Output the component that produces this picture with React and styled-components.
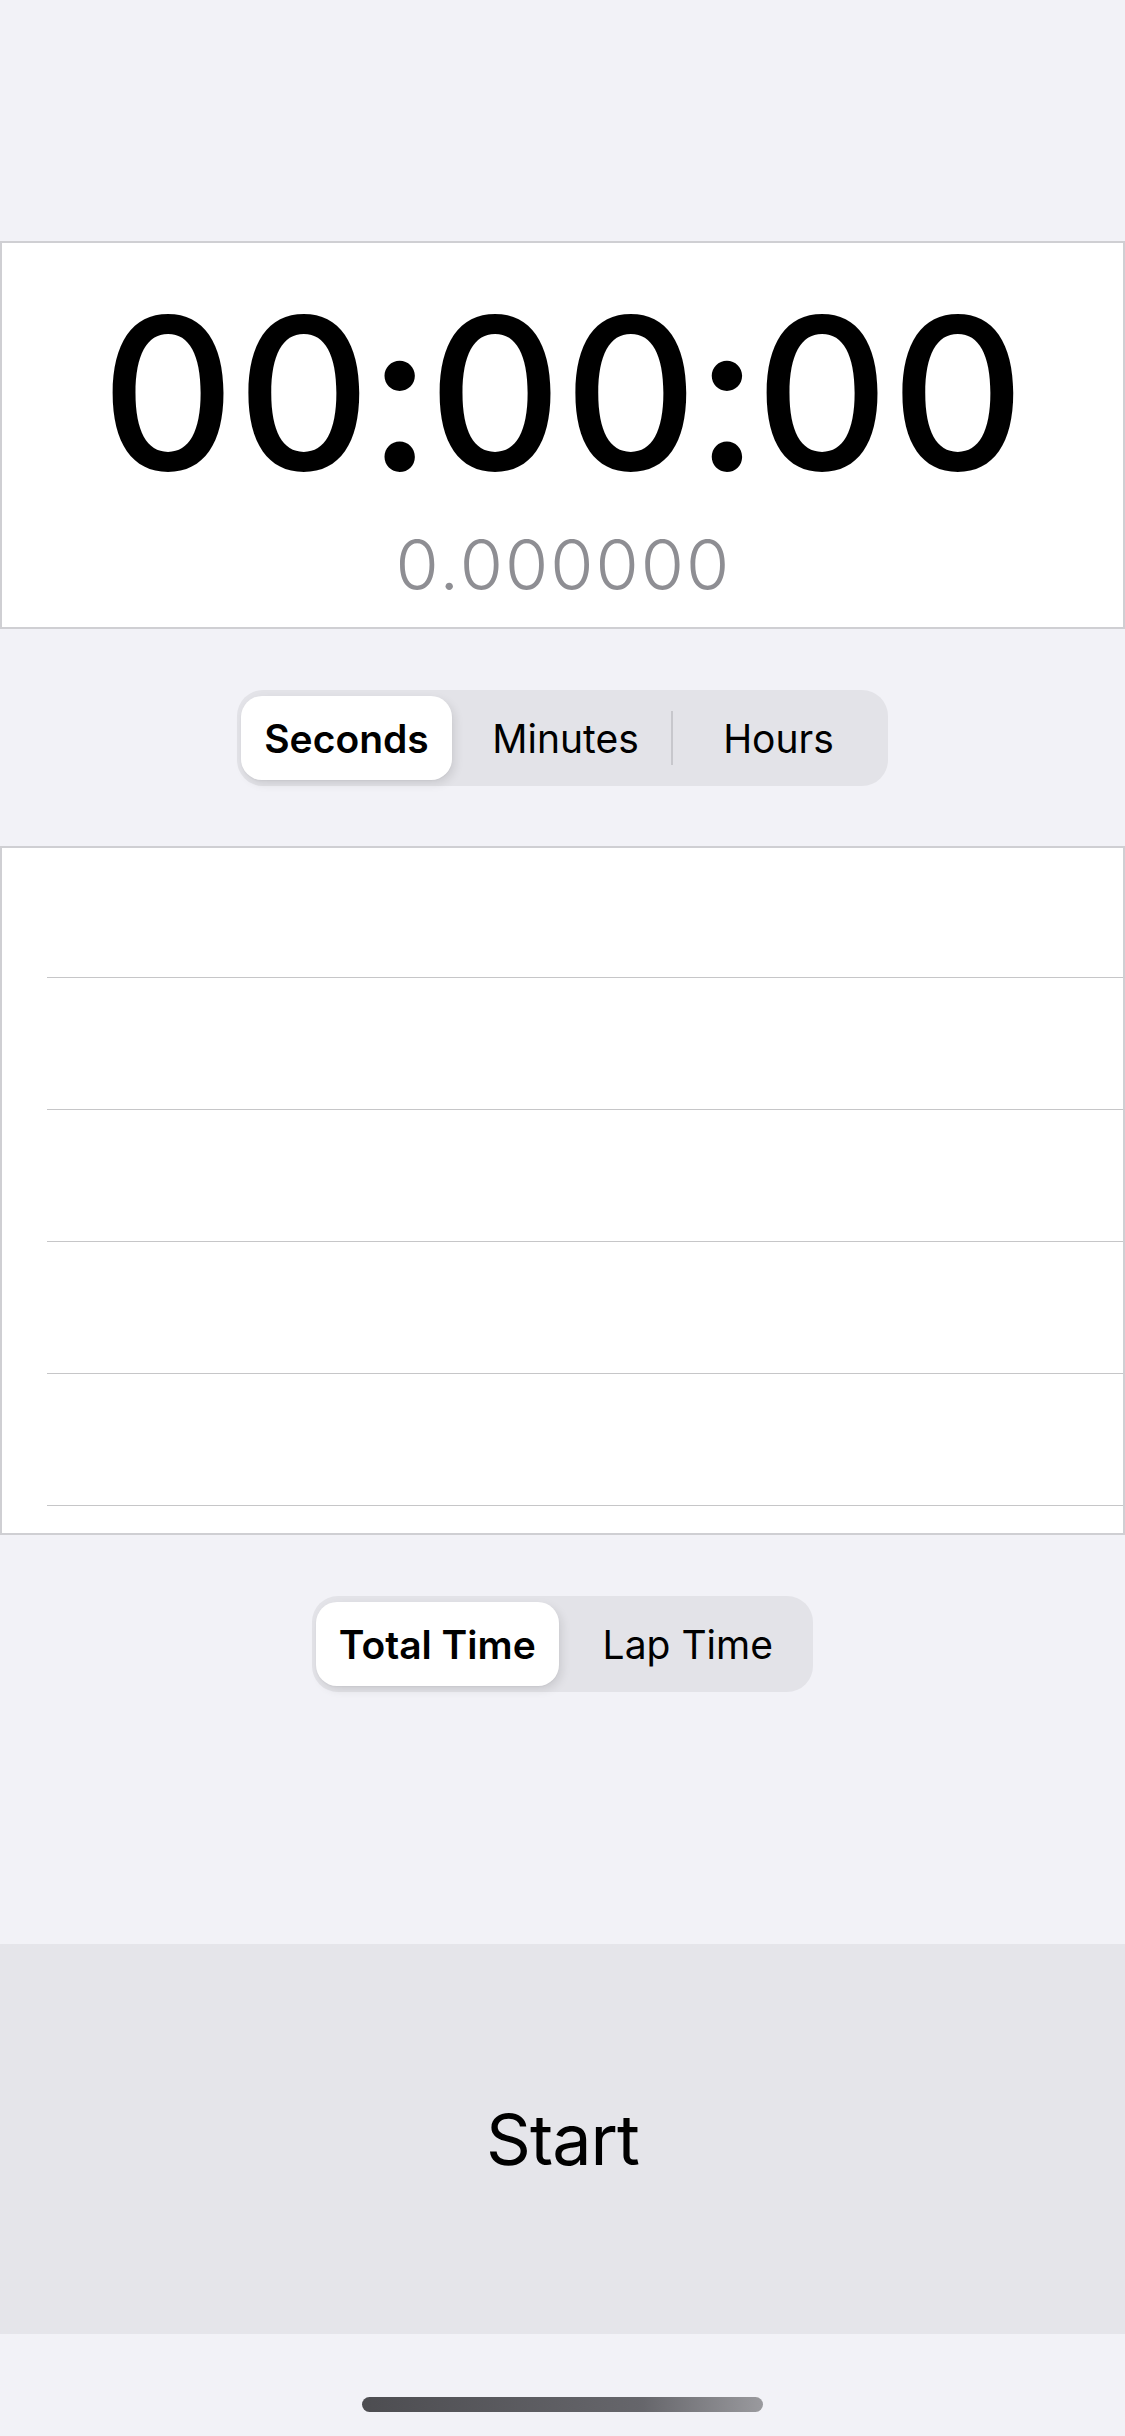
import { Fragment } from "react";
import styled, { createGlobalStyle } from "styled-components";

const GlobalStyle = createGlobalStyle`
    html, body {
        margin: 0;
        padding: 0;
        background: #f2f2f7;
    }
    body {
        font-family: Inter, "Noto Sans", "Liberation Sans", sans-serif;
        color: #000;
    }
`

const units = ["Seconds", "Minutes", "Hours"]
const modes = ["Total Time", "Lap Time"]
const laps = [0, 1, 2, 3, 4]

const Segmented = ({ items, active, width }) => {
    return <Segments width={width}>
        {
            items.map((label, index) => {
                // divider only between two segments that are not selected
                const showDivider = index > 0 && index !== active && index - 1 !== active
                return <Fragment key={label}>
                    {index > 0 && <Divider visible={showDivider} />}
                    <Segment active={index === active}>{label}</Segment>
                </Fragment>
            })
        }
    </Segments>
}

const App = () => {
    return <Page>
        <GlobalStyle />
        <TimerCard>
            <BigTime>00:00:00</BigTime>
            <SubTime>0.000000</SubTime>
        </TimerCard>
        <Segmented items={units} active={0} width={651} />
        <LapCard>
            {
                laps.map((x) => <LapRow key={x} />)
            }
        </LapCard>
        <Segmented items={modes} active={0} width={501} />
        <StartBar>
            <StartLabel>Start</StartLabel>
        </StartBar>
        <Footer>
            <HomeIndicator />
        </Footer>
    </Page>
}

const Page = styled.div`
    min-height: 2436px;
    display: flex;
    flex-direction: column;
    align-items: center;
    background: #f2f2f7;
    padding-top: 241px;
    box-sizing: border-box;
`
const TimerCard = styled.div`
    width: 100%;
    box-sizing: border-box;
    height: 388px;
    background: #fff;
    border: 2px solid #cfcfd3;
    padding: 42px 0 27px;
    display: flex;
    flex-direction: column;
    align-items: center;
`
const BigTime = styled.div`
    font-size: 211px;
    line-height: 217px;
    font-weight: 500;
    letter-spacing: -1px;
    font-variant-numeric: tabular-nums;
`
const SubTime = styled.div`
    margin-top: 27px;
    font-size: 70px;
    line-height: 72px;
    font-weight: 300;
    color: #8e8e93;
    font-variant-numeric: tabular-nums;
`
const Segments = styled.div`
    margin-top: 61px;
    width: ${p => p.width}px;
    height: 96px;
    box-sizing: border-box;
    padding: 6px 4px;
    border-radius: 26px;
    background: #e3e3e8;
    display: flex;
    align-items: center;
`
const Segment = styled.div`
    flex: 1;
    height: 84px;
    display: flex;
    align-items: center;
    justify-content: center;
    border-radius: 21px;
    font-size: 39px;
    font-weight: ${p => p.active ? 590 : 400};
    background: ${p => p.active ? "#fff" : "transparent"};
    margin-right: ${p => p.active ? "6px" : "0"};
    box-shadow: ${p => p.active ? "3px 4px 10px rgba(0,0,0,0.10), 0 1px 2px rgba(0,0,0,0.04)" : "none"};
`
const Divider = styled.div`
    width: 2px;
    height: 54px;
    background: ${p => p.visible ? "#c7c7cc" : "transparent"};
`
const LapCard = styled.div`
    margin-top: 60px;
    width: 100%;
    box-sizing: border-box;
    background: #fff;
    border: 2px solid #cfcfd3;
    padding-bottom: 27px;
`
const LapRow = styled.div`
    height: 131px;
    margin-left: 45px;
    border-bottom: 1px solid #c6c6c8;
    &:first-child{
        height: 129px;
    }
`
const StartBar = styled.div`
    margin-top: auto;
    width: 100%;
    height: 390px;
    background: #e5e5ea;
    display: flex;
    align-items: center;
    justify-content: center;
`
const StartLabel = styled.span`
    font-size: 70px;
    font-weight: 400;
    letter-spacing: -1px;
`
const Footer = styled.div`
    width: 100%;
    height: 102px;
    display: flex;
    justify-content: center;
    padding-top: 63px;
    box-sizing: border-box;
`
const HomeIndicator = styled.div`
    width: 401px;
    height: 15px;
    border-radius: 8px;
    background: linear-gradient(90deg, #4d4d51 0%, #66666b 70%, #9a9a9e 100%);
`
export default App;
